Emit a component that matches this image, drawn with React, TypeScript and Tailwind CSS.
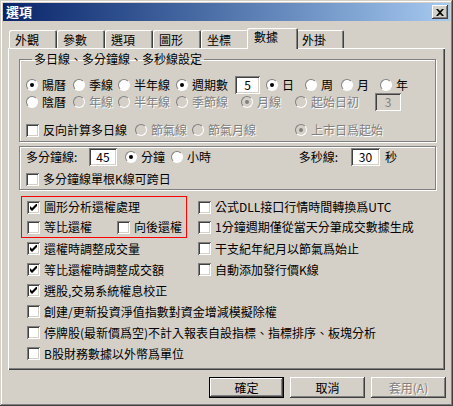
import React from 'react';

const raised =
    'shadow-[inset_-1px_-1px_#404040,inset_1px_1px_#ffffff,inset_-2px_-2px_#808080,inset_2px_2px_#d4d0c8]';
const sunken =
    'shadow-[inset_1px_1px_#808080,inset_-1px_-1px_#ffffff,inset_2px_2px_#404040,inset_-2px_-2px_#d4d0c8]';

function Radio({checked = false, disabled = false}: {checked?: boolean; disabled?: boolean}) {
    return (
        <span
            className={`flex items-center justify-center w-3 h-3 shrink-0 rounded-full border border-t-[#808080] border-l-[#808080] border-b-white border-r-white ${
                disabled ? 'bg-[#d4d0c8]' : 'bg-white'
            }`}
        >
            {checked && (
                <span className={`w-1 h-1 rounded-full ${disabled ? 'bg-[#808080]' : 'bg-black'}`} />
            )}
        </span>
    );
}

function Check({checked = false}: {checked?: boolean}) {
    return (
        <span className={`flex items-center justify-center w-[13px] h-[13px] shrink-0 bg-white ${sunken}`}>
            {checked && (
                <svg width="7" height="7" viewBox="0 0 7 7">
                    <path d="M0 2v3l2 2 5-5V-1L2 4z" fill="#000" />
                </svg>
            )}
        </span>
    );
}

function Label({children, disabled = false}: {children: React.ReactNode; disabled?: boolean}) {
    return (
        <span
            className={`whitespace-nowrap ${
                disabled ? 'text-[#808080] [text-shadow:1px_1px_0_#ffffff]' : 'text-black'
            }`}
        >
            {children}
        </span>
    );
}

function RadioItem({
    label,
    checked,
    disabled,
    className = '',
}: {
    label: string;
    checked?: boolean;
    disabled?: boolean;
    className?: string;
}) {
    return (
        <div className={`flex items-center gap-1 shrink-0 ${className}`}>
            <Radio checked={checked} disabled={disabled} />
            <Label disabled={disabled}>{label}</Label>
        </div>
    );
}

function CheckItem({label, checked, className = ''}: {label: string; checked?: boolean; className?: string}) {
    return (
        <div className={`flex items-center gap-1 shrink-0 ${className}`}>
            <Check checked={checked} />
            <Label>{label}</Label>
        </div>
    );
}

function Field({value, disabled = false, className = ''}: {value: string; disabled?: boolean; className?: string}) {
    return (
        <div
            className={`flex items-center justify-center h-[18px] ${sunken} ${
                disabled ? 'bg-[#d4d0c8] text-[#808080]' : 'bg-white text-black'
            } ${className}`}
        >
            {value}
        </div>
    );
}

function Tab({label, active = false}: {label: string; active?: boolean}) {
    if (active) {
        return (
            <div className="relative z-10 -mx-[2px] w-[51px] h-[21px] -mb-px pl-[7px] pt-[3px] bg-[#d4d0c8] rounded-t-[2px] shadow-[inset_1px_1px_#ffffff,inset_-1px_0_#404040,inset_-2px_0_#808080]">
                {label}
            </div>
        );
    }
    return (
        <div className="w-[48px] h-[18px] pl-[6px] pt-[4px] rounded-t-[2px] shadow-[inset_1px_1px_#ffffff,inset_-1px_0_#404040,inset_-2px_0_#808080]">
            {label}
        </div>
    );
}

function Button({label, primary = false, disabled = false}: {label: string; primary?: boolean; disabled?: boolean}) {
    return (
        <div
            className={`flex items-center justify-center w-[75px] h-[21px] ${primary ? 'border border-black' : ''} ${
                primary ? 'shadow-[inset_-1px_-1px_#404040,inset_1px_1px_#ffffff,inset_-2px_-2px_#808080]' : raised
            }`}
        >
            <Label disabled={disabled}>{label}</Label>
        </div>
    );
}

export default function App() {
    return (
        <div className="w-[453px] h-[406px] bg-[#d4d0c8] p-[3px] text-[12px] leading-[12px] font-['Noto_Sans_CJK_TC','Noto_Sans_CJK_SC',sans-serif] shadow-[inset_-1px_-1px_#404040,inset_1px_1px_#d4d0c8,inset_-2px_-2px_#808080,inset_2px_2px_#ffffff]">
            {/* title bar */}
            <div className="flex items-center justify-between h-[18px] pl-[3px] pr-[2px] bg-linear-to-r from-[#0a246a] to-[#a6caf0]">
                <span className="text-white font-bold text-[13px]">選項</span>
                <div className={`flex items-center justify-center w-4 h-[14px] bg-[#d4d0c8] ${raised}`}>
                    <svg width="8" height="7" viewBox="0 0 8 7">
                        <path d="M0 0h2l2 2 2-2h2L5 3.5 8 7H6L4 5 2 7H0l3-3.5z" fill="#000" />
                    </svg>
                </div>
            </div>

            {/* tabs */}
            <div className="flex items-end h-[27px] pl-[6px]">
                <Tab label="外觀" />
                <Tab label="參數" />
                <Tab label="選項" />
                <Tab label="圖形" />
                <Tab label="坐標" />
                <Tab label="數據" active />
                <Tab label="外掛" />
            </div>

            {/* panel */}
            <div className="w-[437px] h-[322px] ml-[5px] pt-[5px] pl-[11px] pr-[9px] shadow-[inset_1px_1px_#ffffff,inset_-1px_-1px_#404040,inset_-2px_-2px_#808080]">
                <fieldset className="h-[89px] border border-[#808080] shadow-[inset_1px_1px_#ffffff,1px_1px_#ffffff] pl-[6px]">
                    <legend className="ml-[6px] px-[2px]">多日線、多分鐘線、多秒線設定</legend>
                    <div className="flex items-center h-[18px] mt-[11px]">
                        <RadioItem label="陽曆" checked className="w-[47px]" />
                        <RadioItem label="季線" className="w-[45px]" />
                        <RadioItem label="半年線" className="w-[58px]" />
                        <RadioItem label="週期數" checked className="w-[59px]" />
                        <div className="w-[31px]">
                            <Field value="5" className="w-[25px]" />
                        </div>
                        <RadioItem label="日" checked className="w-[39px]" />
                        <RadioItem label="周" className="w-[36px]" />
                        <RadioItem label="月" className="w-[39px]" />
                        <RadioItem label="年" />
                    </div>
                    <div className="flex items-center h-[16px]">
                        <RadioItem label="陰曆" className="w-[47px]" />
                        <RadioItem label="年線" disabled className="w-[45px]" />
                        <RadioItem label="半年線" disabled className="w-[58px]" />
                        <RadioItem label="季節線" disabled className="w-[65px]" />
                        <RadioItem label="月線" checked disabled className="w-[54px]" />
                        <RadioItem label="起始日初" disabled className="w-[80px]" />
                        <Field value="3" disabled className="w-[26px]" />
                    </div>
                    <div className="flex items-center h-[16px] mt-[12px]">
                        <CheckItem label="反向計算多日線" className="w-[109px]" />
                        <RadioItem label="節氣線" disabled className="w-[57px]" />
                        <RadioItem label="節氣月線" disabled className="w-[103px]" />
                        <RadioItem label="上市日爲起始" checked disabled />
                    </div>
                </fieldset>

                <div className="h-[44px] mt-[4px] pl-[6px] border border-[#808080] shadow-[inset_1px_1px_#ffffff,1px_1px_#ffffff]">
                    <div className="flex items-center h-[16px] mt-[2px]">
                        <span className="w-[63px]">多分鐘線:</span>
                        <Field value="45" className="w-[28px] h-[17px]" />
                        <RadioItem label="分鐘" checked className="w-[46px] ml-[8px]" />
                        <RadioItem label="小時" />
                        <span className="ml-auto">多秒線:</span>
                        <Field value="30" className="w-[29px] h-[17px] ml-[13px]" />
                        <span className="ml-[5px] mr-[38px]">秒</span>
                    </div>
                    <div className="flex items-center h-[16px] mt-[6px]">
                        <CheckItem label="多分鐘線單根K線可跨日" />
                    </div>
                </div>

                <div className="flex mt-[6px] ml-[2px]">
                    <div className="w-[166px] h-[42px] border border-[#ff0000] pl-[5px]">
                        <div className="flex items-center h-[20px]">
                            <CheckItem label="圖形分析還權處理" checked />
                        </div>
                        <div className="flex items-center h-[20px]">
                            <CheckItem label="等比還權" className="w-[90px]" />
                            <CheckItem label="向後還權" />
                        </div>
                    </div>
                    <div className="ml-[11px] pt-px">
                        <div className="flex items-center h-[20px]">
                            <CheckItem label="公式DLL接口行情時間轉換爲UTC" />
                        </div>
                        <div className="flex items-center h-[20px]">
                            <CheckItem label="1分鐘週期僅從當天分筆成交數據生成" />
                        </div>
                    </div>
                </div>
                <div className="flex flex-col ml-[8px]">
                    <div className="flex items-center h-[21px]">
                        <CheckItem label="還權時調整成交量" checked className="w-[171px]" />
                        <CheckItem label="干支紀年紀月以節氣爲始止" />
                    </div>
                    <div className="flex items-center h-[21px]">
                        <CheckItem label="等比還權時調整成交額" checked className="w-[171px]" />
                        <CheckItem label="自動添加發行價K線" />
                    </div>
                    <div className="flex items-center h-[21px]">
                        <CheckItem label="選股,交易系統權息校正" checked />
                    </div>
                    <div className="flex items-center h-[21px]">
                        <CheckItem label="創建/更新投資淨值指數對資金增減模擬除權" />
                    </div>
                    <div className="flex items-center h-[21px]">
                        <CheckItem label="停牌股(最新價爲空)不計入報表自設指標、指標排序、板塊分析" />
                    </div>
                    <div className="flex items-center h-[21px]">
                        <CheckItem label="B股財務數據以外幣爲單位" />
                    </div>
                </div>
            </div>

            {/* buttons */}
            <div className="flex justify-end gap-[6px] mt-[7px] pr-[4px]">
                <Button label="確定" primary />
                <Button label="取消" />
                <Button label="套用(A)" disabled />
            </div>
        </div>
    );
}
